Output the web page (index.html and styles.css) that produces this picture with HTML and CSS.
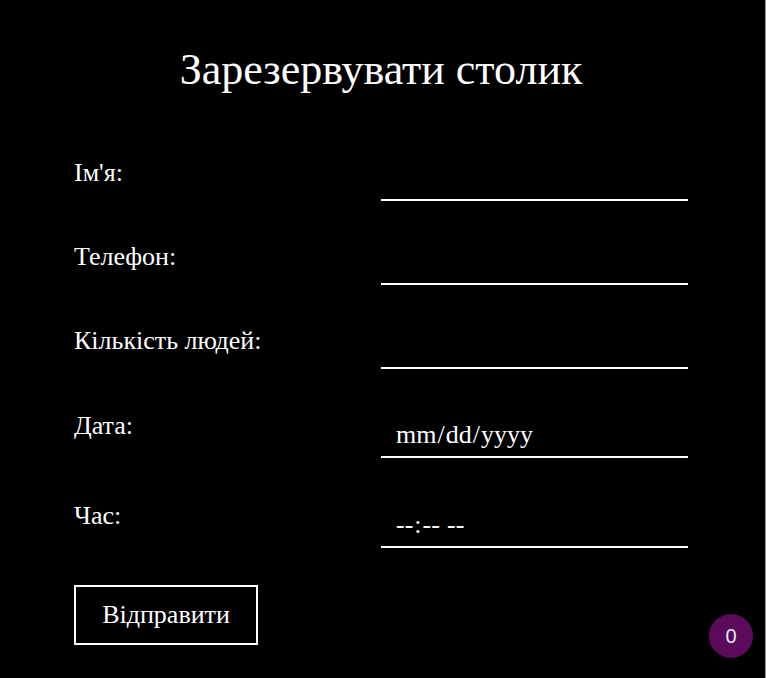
FILE: index.html
```html
<!DOCTYPE html>
<html lang="uk">
<head>
<meta charset="utf-8">
<title>Зарезервувати столик</title>
<link rel="stylesheet" href="styles.css">
</head>
<body>
<main class="page">
  <h1 class="title">Зарезервувати столик</h1>
  <form class="form">
    <div class="row">
      <label class="label" for="name">Ім'я:</label>
      <input class="field" id="name" type="text">
    </div>
    <div class="row">
      <label class="label" for="phone">Телефон:</label>
      <input class="field" id="phone" type="tel">
    </div>
    <div class="row row-before-date">
      <label class="label" for="people">Кількість людей:</label>
      <input class="field" id="people" type="number">
    </div>
    <div class="row row-date">
      <label class="label" for="date">Дата:</label>
      <input class="field field-date" id="date" type="date">
    </div>
    <div class="row row-last">
      <label class="label" for="time">Час:</label>
      <input class="field field-date" id="time" type="time">
    </div>
    <button class="submit" type="button">Відправити</button>
  </form>
</main>
<div class="badge">0</div>
</body>
</html>
```

FILE: styles.css
```css
html, body {
  margin: 0;
  padding: 0;
  background: #000;
}
body {
  min-height: 100vh;
  box-sizing: border-box;
  border-right: 1px solid #9a9a9a;
  color: #fff;
  font-family: "Liberation Serif", "Times New Roman", serif;
  overflow: hidden;
}
.page {
  width: 614px;
  margin-left: 74px;
  padding-top: 45px;
}
.title {
  margin: 0 0 63px;
  text-align: center;
  font-size: 44px;
  font-weight: normal;
  line-height: 50px;
}
.form {
  display: flex;
  flex-direction: column;
}
.row {
  display: flex;
  align-items: flex-start;
  margin-bottom: 41px;
}
.row-before-date {
  margin-bottom: 42px;
}
.row-date {
  margin-bottom: 43px;
}
.row-last {
  margin-bottom: 37px;
}
.label {
  flex: 0 0 50%;
  font-size: 26px;
  line-height: 30px;
}
.field {
  flex: 0 0 50%;
  box-sizing: border-box;
  width: 50%;
  margin: 0;
  padding: 6px 14px;
  background: transparent;
  border: none;
  border-bottom: 2px solid #fff;
  color: #fff;
  font-family: "Liberation Serif", "Times New Roman", serif;
  font-size: 26px;
  height: 43px;
  outline: none;
  color-scheme: dark;
  -moz-appearance: textfield;
}
.field::-webkit-outer-spin-button,
.field::-webkit-inner-spin-button {
  -webkit-appearance: none;
  margin: 0;
}
.field-date {
  height: 47px;
  padding-top: 8px;
  padding-bottom: 5px;
}
.field-date::-webkit-calendar-picker-indicator {
  display: none;
}
.submit {
  align-self: flex-start;
  width: 184px;
  height: 60px;
  background: #000;
  color: #fff;
  border: 2px solid #fff;
  font-family: "Liberation Serif", "Times New Roman", serif;
  font-size: 26px;
  padding: 0;
}
.badge {
  position: fixed;
  right: 13px;
  bottom: 20px;
  width: 44px;
  height: 44px;
  border-radius: 50%;
  background: #5c0a5c;
  color: #e8e8e8;
  font-family: "Liberation Sans", Arial, sans-serif;
  font-size: 20px;
  display: flex;
  align-items: center;
  justify-content: center;
}
```
